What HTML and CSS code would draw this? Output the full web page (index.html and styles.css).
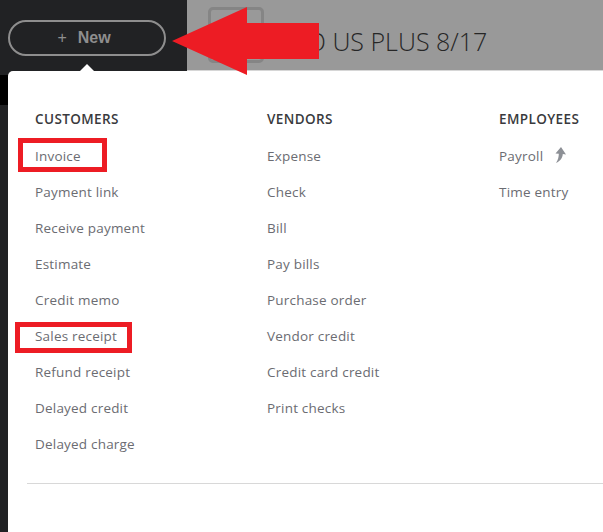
FILE: index.html
```html
<!DOCTYPE html>
<html lang="en">
<head>
    <meta charset="UTF-8">
    <meta name="viewport" content="width=device-width, initial-scale=1.0">
    <title>New menu</title>
    <link rel="stylesheet" href="styles.css">
</head>
<body>
    <header class="topbar">
        <div class="topbar-left">
            <button class="new-btn"><span class="plus">+</span>New</button>
        </div>
        <div class="topbar-right">
            <span class="company-logo"></span>
            <span class="company-name">QBO US PLUS 8/17</span>
        </div>
    </header>
    <div class="page">
        <div class="rail"><span class="rail-mark"></span></div>
        <div class="menu">
            <span class="caret"></span>
            <div class="columns">
                <div class="column">
                    <h2>Customers</h2>
                    <a href="#">Invoice</a>
                    <a href="#">Payment link</a>
                    <a href="#">Receive payment</a>
                    <a href="#">Estimate</a>
                    <a href="#">Credit memo</a>
                    <a href="#">Sales receipt</a>
                    <a href="#">Refund receipt</a>
                    <a href="#">Delayed credit</a>
                    <a href="#">Delayed charge</a>
                </div>
                <div class="column">
                    <h2>Vendors</h2>
                    <a href="#">Expense</a>
                    <a href="#">Check</a>
                    <a href="#">Bill</a>
                    <a href="#">Pay bills</a>
                    <a href="#">Purchase order</a>
                    <a href="#">Vendor credit</a>
                    <a href="#">Credit card credit</a>
                    <a href="#">Print checks</a>
                </div>
                <div class="column">
                    <h2>Employees</h2>
                    <a href="#">Payroll
                        <svg class="upgrade" width="14" height="16" viewBox="0 0 14 16">
                            <path d="M9 0 L14 7.5 L10.8 7 C10.5 11 8.5 14 4 16 C6 13 6.8 10 6.8 6.8 L3.5 6.5 Z" fill="#8d9096"/>
                        </svg>
                    </a>
                    <a href="#">Time entry</a>
                </div>
            </div>
            <hr class="divider">
        </div>
    </div>

    <!-- annotations drawn over the screenshot -->
    <svg class="callout-arrow" width="150" height="70" viewBox="0 0 150 70">
        <polygon points="0,34 75,0 75,16 147,16 147,52 75,52 75,68" fill="#ed1c24"/>
    </svg>
    <span class="mark mark-invoice"></span>
    <span class="mark mark-receipt"></span>
</body>
</html>
```

FILE: styles.css
```css
body {
    margin: 0;
    background: #212224;
    font-family: "Open Sans", Arial, sans-serif;
    height: 532px;
    overflow: hidden;
    position: relative;
}
.topbar {
    display: flex;
    height: 71px;
}
.topbar-left {
    width: 187px;
    background: #212224;
    padding: 20px 0 0 8px;
    box-sizing: border-box;
}
.new-btn {
    width: 158px;
    height: 36px;
    border: 2px solid #8e8e8e;
    border-radius: 18px;
    background: transparent;
    color: #8e8e8e;
    font-family: "Liberation Sans", Arial, sans-serif;
    font-weight: bold;
    font-size: 16px;
    padding: 0 6px 0 0;
}
.new-btn .plus {
    font-weight: normal;
    margin-right: 11px;
}
.topbar-right {
    flex: 1;
    background: #999999;
    border-bottom: 1px solid #d6d6d6;
    display: flex;
    align-items: center;
    padding-left: 21px;
}
.company-logo {
    width: 50px;
    height: 50px;
    border: 3px solid #858585;
    border-radius: 5px;
    margin-right: 8px;
}
.company-name {
    font-size: 25px;
    font-weight: 300;
    color: #262626;
    margin-top: 12px;
}
.page {
    display: flex;
    height: 461px;
}
.rail {
    width: 8px;
    padding-top: 4px;
}
.rail-mark {
    display: block;
    height: 30px;
    background: #000;
}
.menu {
    flex: 1;
    background: #fff;
    border-top-left-radius: 5px;
    position: relative;
    padding-top: 39px;
}
.caret {
    position: absolute;
    left: 72px;
    top: -7px;
    border: 7px solid transparent;
    border-top: 0;
    border-bottom-color: #fff;
}
.columns {
    display: grid;
    grid-template-columns: 232px 232px 1fr;
    padding-left: 27px;
}
.column h2 {
    margin: 0 0 10px;
    font-size: 13.5px;
    font-weight: 600;
    letter-spacing: 0.4px;
    line-height: 18px;
    text-transform: uppercase;
    color: #393a3d;
}
.column a {
    display: flex;
    align-items: center;
    height: 36px;
    font-size: 13.5px;
    letter-spacing: 0.2px;
    color: #6b6c72;
    text-decoration: none;
}
.upgrade {
    margin-left: 9px;
    margin-top: -2px;
}
.divider {
    margin: 21px 0 0 19px;
    border: 0;
    border-top: 1px solid #d8d8d8;
}
.callout-arrow {
    position: absolute;
    left: 172px;
    top: 7px;
}
.mark {
    position: absolute;
    border: 5px solid #ed1c24;
    box-sizing: border-box;
}
.mark-invoice {
    left: 18px;
    top: 138px;
    width: 89px;
    height: 34px;
}
.mark-receipt {
    left: 15px;
    top: 322px;
    width: 117px;
    height: 31px;
}
```
